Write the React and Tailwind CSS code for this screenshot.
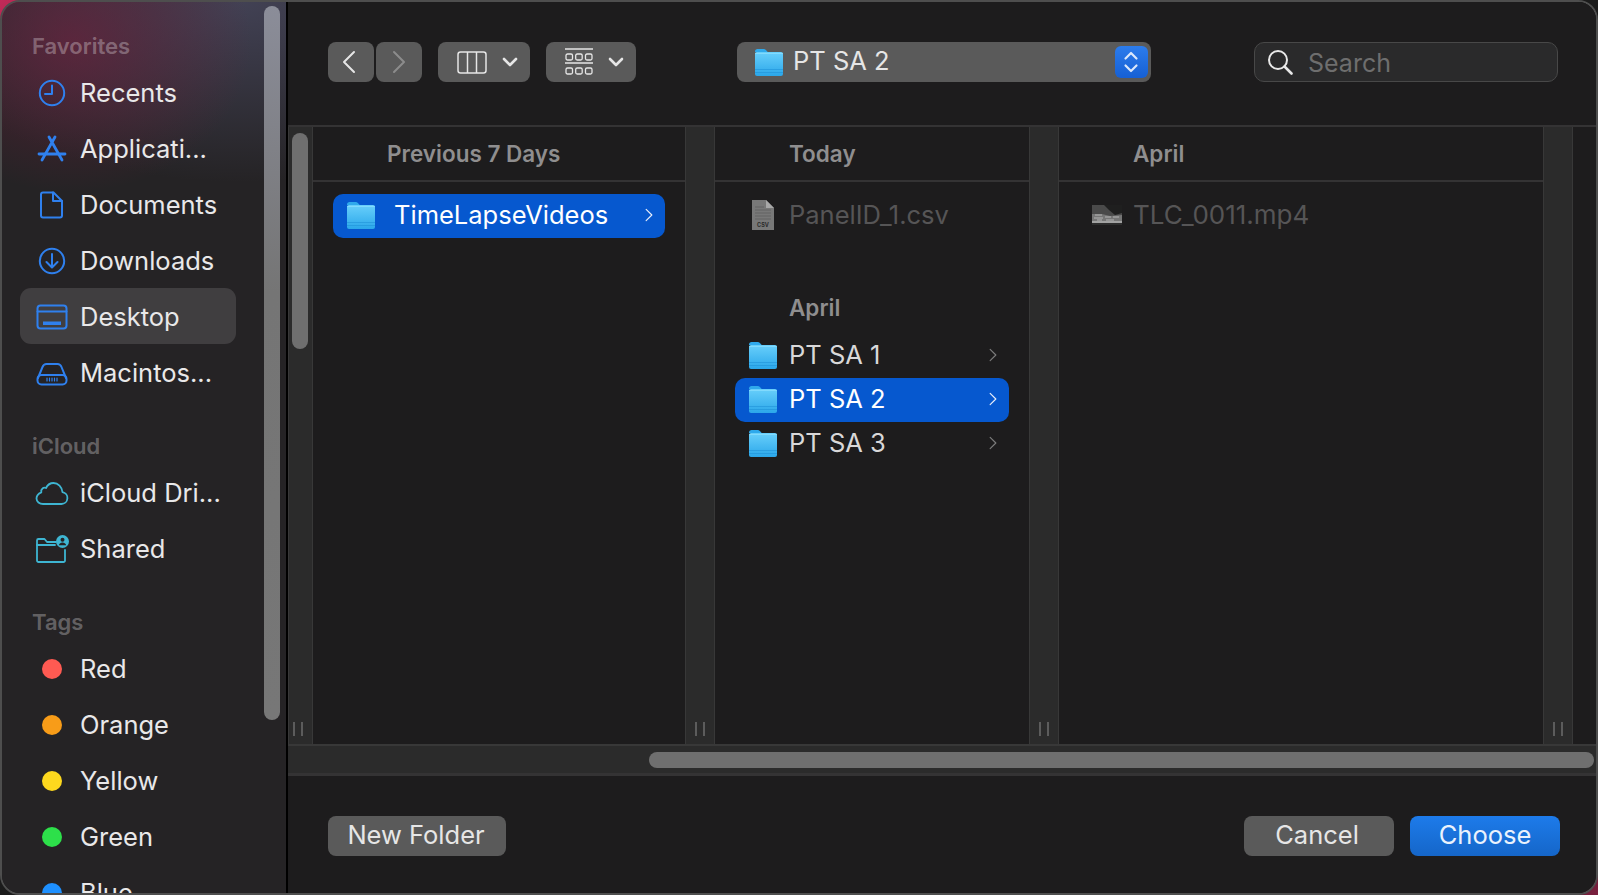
import { useId } from 'react'

const SANS = 'font-[Inter,"Liberation_Sans",sans-serif]'

function Folder({ className = '' }) {
  const id = useId()
  return (
    <svg viewBox="0 0 28 27" className={`w-7 h-[27px] shrink-0 ${className}`}>
      <defs>
        <linearGradient id={id} x1="0" y1="0" x2="0" y2="1">
          <stop offset="0" stopColor="#68cffb" />
          <stop offset="1" stopColor="#2ba7ea" />
        </linearGradient>
      </defs>
      <path d="M0 2.500C0 1 1 0 2.500 0h6.200c1 0 1.600.4 2.200 1l1.800 2H0z" fill="#2fa9ec" />
      <rect x="0" y="3" width="28" height="24" rx="2" fill={`url(#${id})`} />
      <rect x="0" y="4" width="28" height="1" fill="#8fe0fd" opacity="0.7" />
      <rect x="0" y="20" width="28" height="1" fill="#1f93d8" opacity="0.6" />
      <rect x="0" y="23" width="28" height="1" fill="#1f93d8" opacity="0.6" />
    </svg>
  )
}

function Stroke({ color = '#2f80ee', width = 2, children }) {
  return (
    <svg viewBox="0 0 34 30" className="shrink-0 w-[34px] h-[30px]" fill="none" stroke={color} strokeWidth={width} strokeLinecap="round" strokeLinejoin="round">
      {children}
    </svg>
  )
}

const IconRecents = () => (
  <Stroke>
    <circle cx="17" cy="15" r="12.200" />
    <path d="M17 7.500V16h-7" />
  </Stroke>
)
const IconApps = () => (
  <Stroke width={2.800}>
    <path d="M14 3l13 23M20 3L7 26" />
    <path d="M4 20h26" />
  </Stroke>
)
const IconDoc = () => (
  <Stroke>
    <path d="M8 2.500h10.500L27 11v14.500a2 2 0 0 1-2 2H8a2 2 0 0 1-2-2v-21a2 2 0 0 1 2-2z" />
    <path d="M18 2.500V11h9" />
  </Stroke>
)
const IconDownload = () => (
  <Stroke>
    <circle cx="17" cy="15" r="12.200" />
    <path d="M17 8v13M11.500 16l5.500 5.500 5.500-5.500" />
  </Stroke>
)
const IconDesktop = () => (
  <Stroke>
    <rect x="2.500" y="3.500" width="29" height="23" rx="3" />
    <path d="M2.500 9.500h29" />
    <rect x="8" y="19.500" width="18" height="3.500" fill="#2f80ee" stroke="none" />
  </Stroke>
)
const IconDisk = () => (
  <Stroke>
    <path d="M3 20l4.500-11c.6-1.500 1.800-3 4-3h11c2.200 0 3.400 1.500 4 3L31 20" />
    <rect x="2.500" y="17" width="29" height="9.500" rx="4" />
    <path d="M12 20v3M14.500 20v3M17 20v3M19.500 20v3M22 20v3" strokeWidth="1.200" />
  </Stroke>
)
const IconCloud = () => (
  <Stroke color="#3eb5d2" width={1.800}>
    <path d="M8 26h18.500a6 6 0 0 0 1-11.900C27 9 23 5 18.500 5 15 5 12.500 7 11 10c-1-.5-2.500-.4-3.500.5-1.200 1-1.500 2.500-1.200 3.800C3.500 15.500 1.500 17.800 1.500 20.500 1.500 23.700 4.500 26 8 26z" />
  </Stroke>
)
const IconShared = () => (
  <Stroke color="#3eb5d2" width={1.800}>
    <path d="M21 8H12l-2.500-3H3.500A1.500 1.500 0 0 0 2 6.500v20A1.500 1.500 0 0 0 3.500 28h25a1.500 1.500 0 0 0 1.500-1.500V16" />
    <path d="M2 11h18" />
    <circle cx="27.500" cy="7.500" r="6.500" fill="#3eb5d2" stroke="none" />
    <circle cx="27.500" cy="5.800" r="2" fill="#252325" stroke="none" />
    <path d="M23.800 11.200c.6-1.800 2-2.700 3.700-2.700s3.100.9 3.700 2.700z" fill="#252325" stroke="none" />
  </Stroke>
)

const sections = [
  {
    title: 'Favorites',
    height: 'h-[62px] pb-[5px]',
    rowNudge: 'pt-0.5',
    items: [
      { label: 'Recents', icon: IconRecents },
      { label: 'Applicati...', icon: IconApps },
      { label: 'Documents', icon: IconDoc },
      { label: 'Downloads', icon: IconDownload },
      { label: 'Desktop', icon: IconDesktop, active: true },
      { label: 'Macintos...', icon: IconDisk },
    ],
  },
  {
    title: 'iCloud',
    height: 'h-[65px] pb-1.5',
    rowNudge: '',
    items: [
      { label: 'iCloud Dri...', icon: IconCloud },
      { label: 'Shared', icon: IconShared },
    ],
  },
  {
    title: 'Tags',
    height: 'h-[64px] pb-1.5',
    rowNudge: '',
    items: [
      { label: 'Red', dot: 'bg-[#ff5a52]' },
      { label: 'Orange', dot: 'bg-[#f89c18]' },
      { label: 'Yellow', dot: 'bg-[#fdd81e]' },
      { label: 'Green', dot: 'bg-[#2de04a]' },
      { label: 'Blue', dot: 'bg-[#1e90ff]' },
    ],
  },
]

function Sidebar() {
  return (
    <aside className="relative w-[286px] shrink-0 h-full overflow-hidden border-r-2 border-black bg-[#252325] bg-[radial-gradient(ellipse_180px_150px_at_70px_40px,rgba(115,32,62,0.62),rgba(115,32,62,0)),radial-gradient(ellipse_340px_180px_at_240px_0px,rgba(78,78,104,0.7),rgba(78,78,104,0))]">
      {sections.map((section) => (
        <div key={section.title}>
          <div className={`${section.height} flex items-end pl-[30px] text-[22px] leading-[26px] font-semibold text-white/30`}>
            {section.title}
          </div>
          {section.items.map((item) => (
            <div
              key={item.label}
              className={`h-14 w-[216px] ml-[18px] flex items-center rounded-[11px] pl-[15px] ${section.rowNudge} ${item.active ? 'bg-[#403e40]' : ''}`}
            >
              <div className="w-[34px] flex justify-center">
                {item.icon ? <item.icon /> : <span className={`block w-5 h-5 rounded-full ${item.dot}`} />}
              </div>
              <span className="ml-[11px] text-[25.5px] leading-8 text-[#e9e8e9] whitespace-nowrap">{item.label}</span>
            </div>
          ))}
        </div>
      ))}
      <div className="absolute left-[262px] top-1 w-4 h-[714px] rounded-full bg-[linear-gradient(#8b8d99,#757575_40%,#777777)]" />
    </aside>
  )
}

function Chevron({ dir = 'right', className = '' }) {
  return (
    <svg viewBox="0 0 14 24" className={className} fill="none" stroke="currentColor" strokeWidth="2" strokeLinecap="round" strokeLinejoin="round">
      <path d={dir === 'right' ? 'M2 2l10 10L2 22' : 'M12 2L2 12l10 10'} />
    </svg>
  )
}

function SmallDown() {
  return (
    <svg viewBox="0 0 16 10" className="w-4 h-2.5 text-[#e6e6e6]" fill="none" stroke="currentColor" strokeWidth="2.600" strokeLinecap="round" strokeLinejoin="round">
      <path d="M2 2l6 6 6-6" />
    </svg>
  )
}

function Toolbar() {
  return (
    <div className="h-[123px] shrink-0 pt-10 pl-10 flex items-start bg-[#1d1c1d]">
      <button className="w-[46px] h-10 rounded-lg bg-[#5a5a5a] flex items-center justify-center pr-1 text-[#e6e6e6]">
        <Chevron dir="left" className="w-[14px] h-6" />
      </button>
      <button className="w-[46px] h-10 ml-0.5 rounded-lg bg-[#5a5a5a] flex items-center justify-center text-[#8c8c8c]">
        <Chevron className="w-[14px] h-6" />
      </button>
      <button className="w-[92px] h-10 ml-4 rounded-lg bg-[#5a5a5a] flex items-center pl-[19px] gap-[15px]">
        <svg viewBox="0 0 30 23" className="w-[30px] h-[23px]" fill="none" stroke="#e6e6e6" strokeWidth="1.500">
          <rect x="1" y="1" width="28" height="21" rx="2.500" />
          <path d="M10.500 1v21M19.500 1v21" />
        </svg>
        <SmallDown />
      </button>
      <button className="w-[90px] h-10 ml-4 rounded-lg bg-[#5a5a5a] flex items-center pl-[19px] gap-[15px]">
        <svg viewBox="0 0 28 29" className="w-7 h-[29px]" fill="none" stroke="#e6e6e6" strokeWidth="1.300">
          <path d="M0 1h28M0 15h28" />
          <rect x="1" y="6" width="6.500" height="6" rx="1.500" />
          <rect x="10.700" y="6" width="6.500" height="6" rx="1.500" />
          <rect x="20.500" y="6" width="6.500" height="6" rx="1.500" />
          <rect x="1" y="20" width="6.500" height="6" rx="1.500" />
          <rect x="10.700" y="20" width="6.500" height="6" rx="1.500" />
          <rect x="20.500" y="20" width="6.500" height="6" rx="1.500" />
        </svg>
        <SmallDown />
      </button>

      <div className="w-[414px] h-10 ml-[101px] rounded-lg bg-[#5a5a5a] flex items-center pl-[18px] pr-[3px]">
        <Folder />
        <span className="ml-2.5 pb-0.5 text-[25.5px] leading-8 text-[#e6e6e6]">PT SA 2</span>
        <div className="ml-auto w-[33px] h-8 rounded-md bg-[linear-gradient(#2c7cec,#1660d4)] flex items-center justify-center pr-0.5">
          <svg viewBox="0 0 16 24" className="w-4 h-6" fill="none" stroke="#dbe8fb" strokeWidth="2.200" strokeLinecap="round" strokeLinejoin="round">
            <path d="M2.500 8.500L8 3l5.500 5.500M2.500 15.500L8 21l5.500-5.500" />
          </svg>
        </div>
      </div>

      <div className="w-[304px] h-10 ml-[103px] rounded-[10px] border border-[#484848] bg-[#2a2a2b] flex items-center pl-3">
        <svg viewBox="0 0 26 26" className="w-[26px] h-[26px]" fill="none" stroke="#e8e8e8" strokeWidth="2" strokeLinecap="round">
          <circle cx="11" cy="11" r="9" />
          <path d="M17.500 17.500L24.500 24.500" strokeWidth="2.600" />
        </svg>
        <span className="ml-[15px] pt-0.5 text-[25px] leading-8 text-[#6e6e6e]">Search</span>
      </div>
    </div>
  )
}

function Strip({ width, handle = '', children }) {
  return (
    <div className={`relative ${width} shrink-0 h-full bg-[#2b2b2b] border-x border-[#383838] flex items-end justify-center pb-2 ${handle}`}>
      <div className="flex gap-[6px] h-[14px]">
        <span className="w-0.5 h-full bg-[#5c5c5c]" />
        <span className="w-0.5 h-full bg-[#5c5c5c]" />
      </div>
      {children}
    </div>
  )
}

function ColumnHeader({ children, className = 'pl-[74px]' }) {
  return (
    <div className={`h-[55px] flex items-center border-b-2 border-[#343334] text-[22.5px] font-semibold text-[#8f8e8f] ${className}`}>
      {children}
    </div>
  )
}

function Row({ label, gap, selected }) {
  return (
    <div className={`h-11 mx-5 pl-3.5 pr-3 pb-0.5 flex items-center rounded-[10px] ${selected ? 'bg-[#0658cf] text-white' : 'text-[#d9d8d9]'}`}>
      <Folder />
      <span className={`${gap} text-[25.5px] leading-8 whitespace-nowrap`}>{label}</span>
      <Chevron className={`ml-auto w-[8px] h-[14px] ${selected ? 'text-[#e8eefb]' : 'text-[#7c7c7c]'}`} />
    </div>
  )
}

function CsvIcon() {
  return (
    <svg viewBox="0 0 22 30" className="w-[22px] h-[30px] shrink-0">
      <path d="M0 0h14l8 8v22H0z" fill="#787878" />
      <path d="M14 0l8 8h-8z" fill="#a8a8a8" />
      <path d="M3 7h9M3 10h16M3 13h16M3 16h16M3 19h16" stroke="#626262" strokeWidth="1" />
      <text x="11" y="27" textAnchor="middle" fontSize="5.500" fill="#2b2b2b" fontWeight="700">CSV</text>
    </svg>
  )
}

function VideoThumb() {
  return (
    <svg viewBox="0 0 30 20" className="w-[30px] h-5 shrink-0">
      <rect width="30" height="20" fill="#4a4a4a" />
      <path d="M12 0h18v8l-7 2-6-5z" fill="#1f1f1f" />
      <path d="M0 9h10l8 2 12-1v6H0z" fill="#767676" />
      <path d="M3 10h7M13 12h6M2 13h9M21 12h6M5 15h5M14 15h8" stroke="#b4b4b4" strokeWidth="1" />
      <path d="M0 16h30v2H0z" fill="#a2a2a2" />
      <rect y="18" width="30" height="2" fill="#2d2d2d" />
    </svg>
  )
}

function Columns() {
  return (
    <div className="h-[619px] shrink-0 flex border-t-2 border-[#343334] bg-[#1d1c1d]">
      <Strip width="w-[25px]" handle="pr-1.5">
        <div className="absolute left-[3px] top-1.5 w-4 h-[216px] rounded-full bg-[#6f6f6f]" />
      </Strip>

      <div className="w-[372px] shrink-0">
        <ColumnHeader>Previous 7 Days</ColumnHeader>
        <div className="pt-[12px]">
          <Row label="TimeLapseVideos" gap="ml-[19px]" selected />
        </div>
      </div>
      <Strip width="w-[30px]" />

      <div className="w-[314px] shrink-0">
        <ColumnHeader>Today</ColumnHeader>
        <div className="pt-[12px]">
          <div className="h-11 mx-5 pl-[17px] pb-0.5 flex items-center text-[#565556]">
            <CsvIcon />
            <span className="ml-[15px] text-[25.5px] leading-8">PanelID_1.csv</span>
          </div>
        </div>
        <div className="h-[96px] pl-[74px] pb-[13px] flex items-end text-[22.5px] leading-[26px] font-semibold text-[#8f8e8f]">April</div>
        <Row label="PT SA 1" gap="ml-3" />
        <Row label="PT SA 2" gap="ml-3" selected />
        <Row label="PT SA 3" gap="ml-3" />
      </div>
      <Strip width="w-[30px]" />

      <div className="w-[484px] shrink-0">
        <ColumnHeader>April</ColumnHeader>
        <div className="pt-[12px]">
          <div className="h-11 pl-[33px] pb-0.5 flex items-center text-[#565556]">
            <VideoThumb />
            <span className="ml-[11px] text-[26px] leading-8">TLC_0011.mp4</span>
          </div>
        </div>
      </div>
      <Strip width="w-[30px]" />
      <div className="flex-1" />
    </div>
  )
}

export default function App() {
  return (
    <div className={`h-screen w-full overflow-hidden bg-[linear-gradient(135deg,#c22a58,#1b1b1b_12%,#1b1b1b_90%,#7a1f3e)] ${SANS}`}>
      <div className="h-full rounded-[20px] border-2 border-[#4e4e4e] overflow-hidden flex">
        <Sidebar />
        <main className="flex-1 min-w-0 h-full flex flex-col bg-[#1d1c1d]">
          <Toolbar />
          <Columns />
          <div className="h-[32px] shrink-0 flex items-center bg-[#2b2b2b] border-t-2 border-[#383838] border-b-[3px] border-b-[#343334] pl-[361px] pr-0.5">
            <div className="w-full h-4 rounded-full bg-[#6f6f6f]" />
          </div>
          <footer className="flex-1 flex items-start justify-between pt-10 pl-10 pr-9 bg-[#1d1c1d] text-[25.5px] leading-8">
            <button className="w-[178px] h-10 pb-0.5 pr-0.5 rounded-lg bg-[#5a5a5a] text-[#e6e6e6]">New Folder</button>
            <div className="flex gap-4">
              <button className="w-[150px] h-10 pb-0.5 pr-1 rounded-lg bg-[#5a5a5a] text-[#e6e6e6]">Cancel</button>
              <button className="w-[150px] h-10 pb-0.5 rounded-lg bg-[linear-gradient(#1d7bea,#1566c9)] text-[#eaf2fd]">Choose</button>
            </div>
          </footer>
        </main>
      </div>
    </div>
  )
}
